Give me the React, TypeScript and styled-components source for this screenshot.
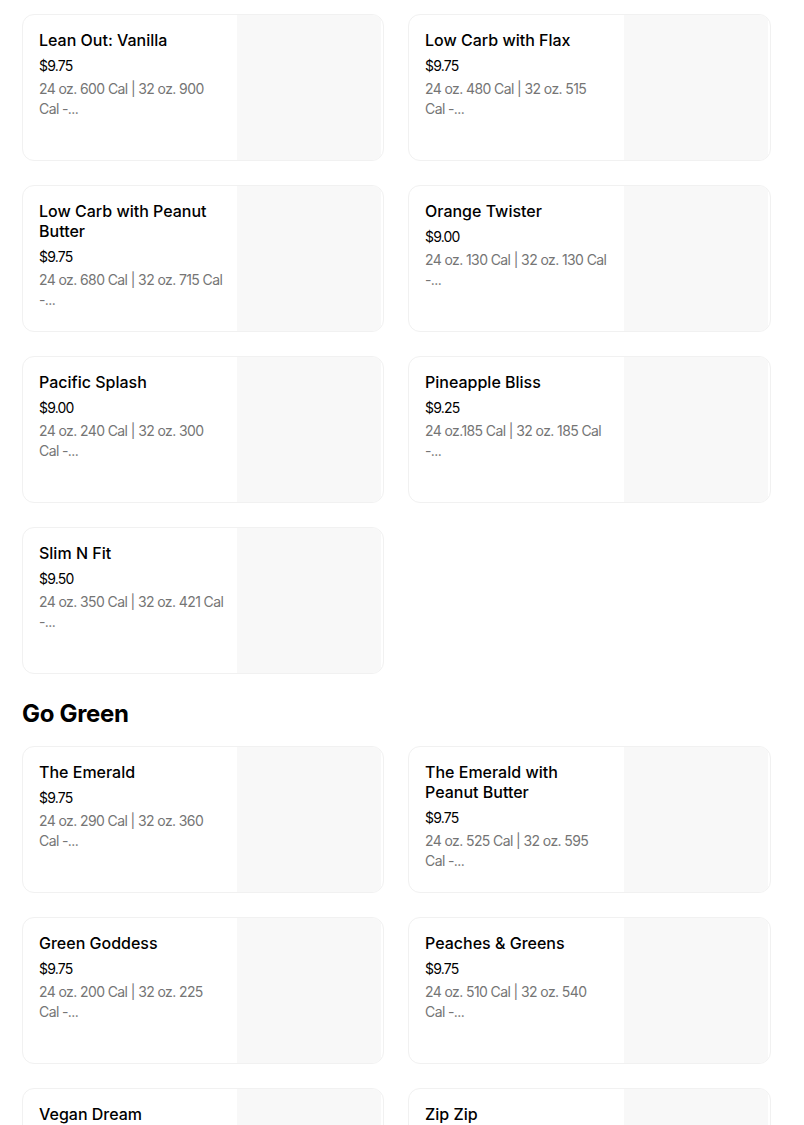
import styled, { createGlobalStyle } from 'styled-components';

const GlobalStyle = createGlobalStyle`
  html, body {
    margin: 0;
    padding: 0;
    background: #ffffff;
  }
  body {
    font-family: Inter, "Noto Sans", "Liberation Sans", sans-serif;
    color: #000000;
    -webkit-font-smoothing: antialiased;
  }
  * {
    box-sizing: border-box;
  }
`;

type Item = {
  title: string;
  price: string;
  description: string;
};

type Section = {
  heading?: string;
  items: Item[];
};

// descriptions carry the line break the menu shows before truncation
const sections: Section[] = [
  {
    items: [
      { title: 'Lean Out: Vanilla', price: '$9.75', description: '24 oz. 600 Cal | 32 oz. 900\nCal -...' },
      { title: 'Low Carb with Flax', price: '$9.75', description: '24 oz. 480 Cal | 32 oz. 515\nCal -...' },
      { title: 'Low Carb with Peanut Butter', price: '$9.75', description: '24 oz. 680 Cal | 32 oz. 715 Cal\n-...' },
      { title: 'Orange Twister', price: '$9.00', description: '24 oz. 130 Cal | 32 oz. 130 Cal\n-...' },
      { title: 'Pacific Splash', price: '$9.00', description: '24 oz. 240 Cal | 32 oz. 300\nCal -...' },
      { title: 'Pineapple Bliss', price: '$9.25', description: '24 oz.185 Cal | 32 oz. 185 Cal\n-...' },
      { title: 'Slim N Fit', price: '$9.50', description: '24 oz. 350 Cal | 32 oz. 421 Cal\n-...' },
    ],
  },
  {
    heading: 'Go Green',
    items: [
      { title: 'The Emerald', price: '$9.75', description: '24 oz. 290 Cal | 32 oz. 360\nCal -...' },
      { title: 'The Emerald with Peanut Butter', price: '$9.75', description: '24 oz. 525 Cal | 32 oz. 595\nCal -...' },
      { title: 'Green Goddess', price: '$9.75', description: '24 oz. 200 Cal | 32 oz. 225\nCal -...' },
      { title: 'Peaches & Greens', price: '$9.75', description: '24 oz. 510 Cal | 32 oz. 540\nCal -...' },
      { title: 'Vegan Dream', price: '$9.75', description: '24 oz. 300 Cal | 32 oz. 380\nCal -...' },
      { title: 'Zip Zip', price: '$9.75', description: '24 oz. 250 Cal | 32 oz. 320\nCal -...' },
    ],
  },
];

const Page = styled.div`
  height: 1125px;
  overflow: hidden;
  padding: 14px 33px 0 22px;
`;

const SectionHeading = styled.h2`
  margin: 24px 0 16px;
  font-size: 24px;
  line-height: 32px;
  font-weight: 700;
  letter-spacing: -0.3px;
`;

const Grid = styled.ul`
  list-style: none;
  margin: 0;
  padding: 0;
  display: grid;
  grid-template-columns: 362px 1fr;
  column-gap: 24px;
  row-gap: 24px;
`;

const Card = styled.li`
  display: flex;
  height: 147px;
  border: 1px solid #f1f1f1;
  border-radius: 12px;
  overflow: hidden;
  background: #ffffff;
  cursor: pointer;
`;

const Info = styled.div`
  flex: 1 1 auto;
  min-width: 0;
  overflow: hidden;
  padding: 15px 8px 16px 16px;
`;

const Title = styled.div`
  font-size: 16px;
  line-height: 20px;
  font-weight: 500;
  color: #000000;
  margin-bottom: 6px;
  padding-right: 8px;
`;

const Price = styled.div`
  font-size: 14px;
  line-height: 20px;
  font-weight: 400;
  color: #000000;
  margin-bottom: 3px;
  letter-spacing: -0.8px;
`;

const Description = styled.div`
  font-size: 14px;
  line-height: 20px;
  font-weight: 400;
  color: #757575;
  letter-spacing: -0.6px;
  white-space: pre;
  display: -webkit-box;
  -webkit-line-clamp: 2;
  -webkit-box-orient: vertical;
  overflow: hidden;
`;

const Thumb = styled.div`
  flex: 0 0 144px;
  background: #f8f8f8;
  margin: 0 2px 0 0;
`;

const MenuCard = ({ title, price, description }: Item) => (
  <Card>
    <Info>
      <Title>{title}</Title>
      <Price>{price}</Price>
      <Description>{description}</Description>
    </Info>
    <Thumb />
  </Card>
);

const App = () => (
  <>
    <GlobalStyle />
    <Page>
      {sections.map((section, i) => (
        <div key={`section-${i}`}>
          {section.heading && <SectionHeading>{section.heading}</SectionHeading>}
          <Grid>
            {section.items.map((item) => (
              <MenuCard key={item.title} {...item} />
            ))}
          </Grid>
        </div>
      ))}
    </Page>
  </>
);

export default App;
